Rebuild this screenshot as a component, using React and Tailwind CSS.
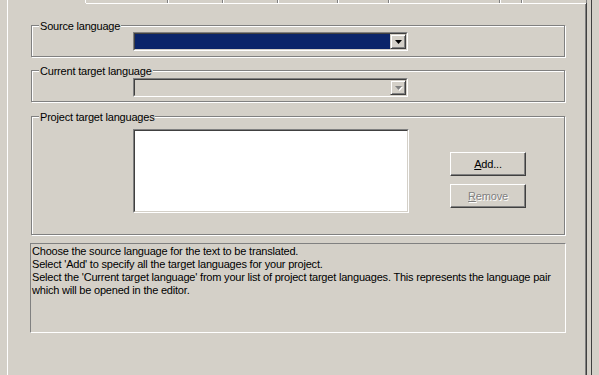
import React from "react";

const font = { fontFamily: '"Liberation Sans", Arial, sans-serif' };

function Group({ label, className, children }) {
  return (
    <div
      className={`relative w-[534px] border border-[#808080] shadow-[inset_1px_1px_0_#ffffff,1px_1px_0_#ffffff] ${className}`}
    >
      <span className="absolute left-[7px] top-[-6px] bg-[#d4d0c8] px-[1px] text-[11px] leading-[13px] tracking-[-0.2px] text-black">
        {label}
      </span>
      {children}
    </div>
  );
}

function Arrow({ disabled }) {
  return (
    <svg width="7" height="4" viewBox="0 0 7 4" className={disabled ? "drop-shadow-[1px_1px_0_#ffffff]" : ""}>
      <path d="M0 0H7L3.5 4Z" fill={disabled ? "#808080" : "#000000"} />
    </svg>
  );
}

function Combo({ selected, disabled }) {
  return (
    <div className="flex h-[19px] w-[275px] border-t border-l border-[#808080] border-b border-r border-b-white border-r-white">
      <div className="flex flex-1 border-t border-l border-[#404040] border-b border-r border-b-[#d4d0c8] border-r-[#d4d0c8]">
        <div className={`flex-1 ${selected ? "bg-[#0a246a]" : "bg-[#d4d0c8]"}`} />
        <div className="flex h-[15px] w-[16px] items-center justify-center border-t border-l border-t-[#d4d0c8] border-l-[#d4d0c8] border-b border-r border-b-[#404040] border-r-[#404040] bg-[#d4d0c8] shadow-[inset_1px_1px_0_#ffffff,inset_-1px_-1px_0_#808080]">
          <Arrow disabled={disabled} />
        </div>
      </div>
    </div>
  );
}

function Button({ children, disabled }) {
  return (
    <div className="flex h-[24px] w-[76px] items-center justify-center border-t border-l border-white border-b border-r border-b-[#404040] border-r-[#404040] bg-[#d4d0c8] shadow-[inset_-1px_-1px_0_#808080]">
      <span
        className={`text-[11px] leading-[13px] tracking-[-0.2px] ${disabled ? "text-[#808080] [text-shadow:1px_1px_0_#ffffff]" : "text-black"}`}
      >
        {children}
      </span>
    </div>
  );
}

const tabs = [83, 55, 55, 60, 51, 111, 22, 65];

export default function App() {
  return (
    <div className="relative h-[375px] w-[599px] overflow-hidden bg-[#d4d0c8]" style={font}>
      <div className="flex">
        <div className="ml-[7px] flex flex-col">
          {/* tab stubs */}
          <div className="flex h-[3px]">
            <div className="w-[78px] border-l border-white" />
            {tabs.map((w, i) => (
              <div
                key={i}
                className="border-l border-white shadow-[inset_-1px_0_0_#808080]"
                style={{ width: w }}
              />
            ))}
          </div>
          {/* panel */}
          <div className="flex h-[372px] w-[580px] border-l border-white border-r border-r-[#404040] shadow-[inset_-1px_0_0_#808080]">
            <div className="flex w-full flex-col">
              <div className="ml-[78px] h-[1px] bg-white" />
              <div className="flex flex-col pl-[23px] pt-[21px]">
                <Group label="Source language" className="h-[32px]">
                  <div className="pl-[101px] pt-[6px]">
                    <Combo selected />
                  </div>
                </Group>
                <Group label="Current target language" className="mt-[13px] h-[32px]">
                  <div className="pl-[101px] pt-[7px]">
                    <Combo disabled />
                  </div>
                </Group>
                <Group label="Project target languages" className="mt-[14px] h-[119px]">
                  <div className="flex pl-[101px] pt-[12px]">
                    <div className="h-[84px] w-[276px] border-t border-l border-[#808080] border-b border-r border-b-white border-r-white">
                      <div className="h-full w-full border-t border-l border-[#404040] border-b border-r border-b-[#d4d0c8] border-r-[#d4d0c8] bg-white" />
                    </div>
                    <div className="ml-[41px] flex flex-col gap-[8px] pt-[23px]">
                      <Button>
                        <span className="underline underline-offset-1">A</span>dd...
                      </Button>
                      <Button disabled>
                        <span className="underline underline-offset-1">R</span>emove
                      </Button>
                    </div>
                  </div>
                </Group>
                <div className="ml-[-1px] mt-[8px] h-[90px] w-[536px] border-t border-l border-[#808080] border-b border-r border-b-white border-r-white px-[1px] pt-[1px] text-[11px] leading-[13px] tracking-[-0.2px] text-black">
                  <p>Choose the source language for the text to be translated.</p>
                  <p>Select 'Add' to specify all the target languages for your project.</p>
                  <p className="whitespace-nowrap">
                    Select the 'Current target language' from your list of project target languages. This represents the language pair
                  </p>
                  <p>which will be opened in the editor.</p>
                </div>
              </div>
            </div>
          </div>
        </div>
        <div className="ml-[4px] h-[375px] w-[1px] bg-[#404040]" />
      </div>
    </div>
  );
}
